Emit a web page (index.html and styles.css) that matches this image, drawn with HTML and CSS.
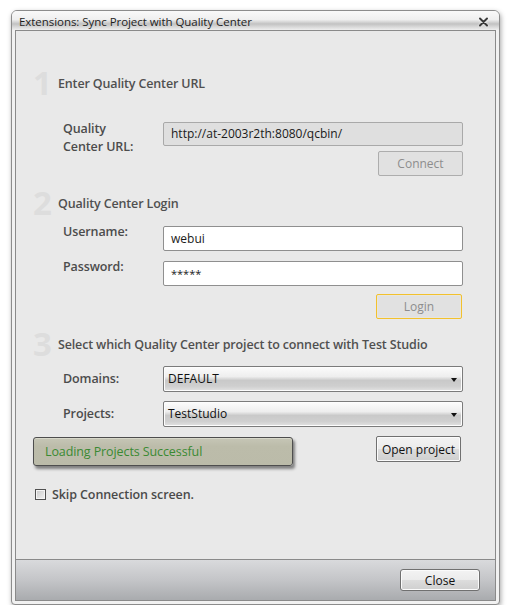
FILE: index.html
```html
<!DOCTYPE html>
<html>
<head>
<meta charset="utf-8">
<link rel="stylesheet" href="styles.css">
</head>
<body>
<div class="window">
  <div class="titlebar">
    <span class="title">Extensions: Sync Project with Quality Center</span>
    <svg class="close-x" width="11" height="10" viewBox="0 0 11 10"><path d="M2 1.5 L9 8.5 M9 1.5 L2 8.5" stroke="#3a3a3a" stroke-width="2" stroke-linecap="round"/></svg>
  </div>
  <div class="inner">
    <div class="main">
      <div class="head head1"><span class="num">1</span><span class="htext">Enter Quality Center URL</span></div>
      <div class="row row-url">
        <label class="lbl lbl-2">Quality<br>Center URL:</label>
        <div class="field field-ro">http://at-2003r2th:8080/qcbin/</div>
      </div>
      <div class="row row-act row-connect">
        <button class="btn btn-disabled btn-connect">Connect</button>
      </div>

      <div class="head head2"><span class="num">2</span><span class="htext">Quality Center Login</span></div>
      <div class="row row-user">
        <label class="lbl lbl-top">Username:</label>
        <div class="field">webui</div>
      </div>
      <div class="row row-pass">
        <label class="lbl lbl-top">Password:</label>
        <div class="field field-pw">*****</div>
      </div>
      <div class="row row-act row-login">
        <button class="btn btn-disabled btn-login">Login</button>
      </div>

      <div class="head head3"><span class="num">3</span><span class="htext">Select which Quality Center project to connect with Test Studio</span></div>
      <div class="row row-combo row-domains">
        <label class="lbl lbl-mid">Domains:</label>
        <div class="combo"><span>DEFAULT</span><i class="arrow"></i></div>
      </div>
      <div class="row row-combo row-projects">
        <label class="lbl lbl-mid">Projects:</label>
        <div class="combo"><span>TestStudio</span><i class="arrow"></i></div>
      </div>

      <div class="status-row">
        <div class="status">Loading Projects Successful</div>
        <button class="btn btn-open">Open project</button>
      </div>

      <div class="check-row">
        <span class="checkbox"></span>
        <span class="check-label">Skip Connection screen.</span>
      </div>
    </div>
    <div class="footer">
      <button class="btn btn-close">Close</button>
    </div>
  </div>
</div>
</body>
</html>
```
FILE: styles.css
```css
html, body {
  margin: 0;
  padding: 0;
  background: #ffffff;
}
body {
  font-family: "Open Sans", "Noto Sans", sans-serif;
  font-size: 12px;
  color: #444;
}
.window {
  margin: 10px 0 0 11px;
  width: 481px;
  height: 590px;
  border: 1px solid #8c8c8c;
  border-radius: 6px 6px 4px 4px;
  background: #f1f1f1;
  padding: 0 3px 3px 3px;
  box-sizing: content-box;
  box-shadow: 1px 2px 5px rgba(0,0,0,0.35);
  display: flex;
  flex-direction: column;
}
.titlebar {
  height: 19px;
  flex: none;
  display: flex;
  align-items: center;
  justify-content: space-between;
  margin: 0 -3px;
  padding: 0 10px 0 7px;
  border-radius: 5px 5px 0 0;
  background: linear-gradient(to bottom, #f9f9f9 0%, #efefef 45%, #c2c2c2 68%, #d3d3d3 80%, #efefef 100%);
}
.title {
  font-size: 11.5px;
  color: #1e1e1e;
  letter-spacing: -0.05px;
  margin-top: 2px;
}
.close-x {
  margin-top: 3px;
  filter: drop-shadow(0 0 1px #fff);
}
.inner {
  flex: 1;
  border: 1px solid #8a8a8a;
  background: #e9e9e9;
  display: flex;
  flex-direction: column;
}
.main {
  flex: 1;
  display: flex;
  flex-direction: column;
}
.head {
  display: flex;
  align-items: center;
  height: 24px;
  padding-left: 17px;
}
.head1 { margin-top: 40px; }
.head2 { margin-top: 15px; }
.head3 { margin-top: 13px; }
.num {
  width: 25px;
  font-size: 33px;
  line-height: 24px;
  font-weight: 700;
  color: #dddddd;
  font-family: "Open Sans", sans-serif;
}
.htext {
  font-size: 12.5px;
  font-weight: 600;
  color: #505050;
  letter-spacing: -0.15px;
}
.row {
  display: grid;
  grid-template-columns: 100px 300px;
  padding-left: 47px;
}
.lbl {
  font-size: 12.5px;
  font-weight: 600;
  color: #4c4c4c;
  line-height: 18px;
  letter-spacing: -0.1px;
}
.lbl-2 { height: 24px; margin-top: -2px; }
.lbl-top { margin-top: -3px; }
.lbl-mid { align-self: center; }
.row-url { margin-top: 27px; }
.row-user { margin-top: 11px; }
.row-pass { margin-top: 10px; }
.row-domains { margin-top: 10px; }
.row-projects { margin-top: 9px; }
.field {
  height: 25px;
  box-sizing: border-box;
  border: 1px solid #8f8f8f;
  border-radius: 2px;
  background: #ffffff;
  color: #1a1a1a;
  padding-left: 7px;
  line-height: 23px;
  font-size: 12px;
}
.field-ro {
  height: 24px;
  line-height: 22px;
  background: #dfdfdf;
  border-color: #a9a9a9;
}
.field-pw { font-size: 11px; }
.row-act {
  display: flex;
  justify-content: flex-end;
  width: 447px;
  padding-left: 0;
}
.row-connect { margin-top: 5px; }
.row-login { margin-top: 8px; width: 446px; }
.btn {
  font-family: "Open Sans", "Noto Sans", sans-serif;
  font-size: 12px;
  box-sizing: border-box;
  padding: 0;
  cursor: default;
}
.btn-disabled {
  height: 25px;
  width: 85px;
  border: 1px solid #adadad;
  border-radius: 2px;
  background: #e1e1e1;
  color: #8d8d8d;
}
.btn-login {
  width: 86px;
  border-color: #f2c12e;
  box-shadow: inset 0 0 0 1px #e9e6dc;
}
.combo {
  height: 26px;
  box-sizing: border-box;
  border: 1px solid #7b7b7b;
  border-radius: 2px;
  box-shadow: inset 0 0 0 1px #fdfdfd;
  background: linear-gradient(to bottom, #fcfcfc 0%, #eeeeee 40%, #c9c9c9 56%, #cfcfcf 80%, #e2e2e2 100%);
  display: flex;
  align-items: center;
  justify-content: space-between;
  padding: 0 5px 0 4px;
  color: #111;
  font-size: 12px;
}
.combo span { margin-top: -2px; }
.arrow {
  width: 0;
  height: 0;
  border-left: 3px solid transparent;
  border-right: 3px solid transparent;
  border-top: 4px solid #111;
  margin-top: 1px;
}
.status-row {
  margin-top: 9px;
  display: flex;
  align-items: flex-start;
  padding-left: 17px;
  width: 428px;
  justify-content: space-between;
}
.status {
  margin-top: 1px;
  width: 260px;
  height: 29px;
  box-sizing: border-box;
  border: 1px solid #4e4e4e;
  border-radius: 3px;
  background: linear-gradient(to bottom, #c6c6b6 0%, #bcbcaa 30%, #bbbba9 100%);
  box-shadow: inset 0 1px 0 #d8d8ca, 2px 3px 3px rgba(0,0,0,0.45);
  color: #3a8a33;
  font-size: 12.5px;
  line-height: 27px;
  padding-left: 11px;
  letter-spacing: -0.1px;
}
.btn-open {
  width: 85px;
  height: 26px;
  border: 1px solid #707070;
  border-radius: 2px;
  background: linear-gradient(to bottom, #f3f3f3 0%, #ebebeb 50%, #dddddd 50%, #cfcfcf 100%);
  box-shadow: inset 0 0 0 1px #fbfbfb;
  color: #111;
}
.check-row {
  margin-top: 20px;
  display: flex;
  align-items: center;
  padding-left: 19px;
}
.checkbox {
  width: 11px;
  height: 11px;
  box-sizing: border-box;
  border: 1px solid #505050;
  box-shadow: inset 0 0 0 1px #f5f5f5;
  background: linear-gradient(135deg, #c9c9c9 0%, #f2f2f2 100%);
}
.check-label {
  margin-left: 6px;
  font-size: 12.5px;
  font-weight: 600;
  color: #4a4a4a;
  letter-spacing: -0.1px;
}
.footer {
  height: 40px;
  flex: none;
  border-top: 1px solid #8a8a8a;
  background: linear-gradient(to bottom, #d9dadc 0%, #c4c5c8 50%, #a9abae 100%);
  display: flex;
  justify-content: flex-end;
  align-items: flex-start;
  padding-right: 15px;
}
.btn-close {
  margin-top: 9px;
  width: 80px;
  height: 22px;
  border: 1px solid #707070;
  border-radius: 3px;
  background: linear-gradient(to bottom, #f3f3f3 0%, #ebebeb 50%, #dddddd 50%, #cfcfcf 100%);
  box-shadow: inset 0 0 0 1px #fbfbfb;
  color: #111;
}
```
